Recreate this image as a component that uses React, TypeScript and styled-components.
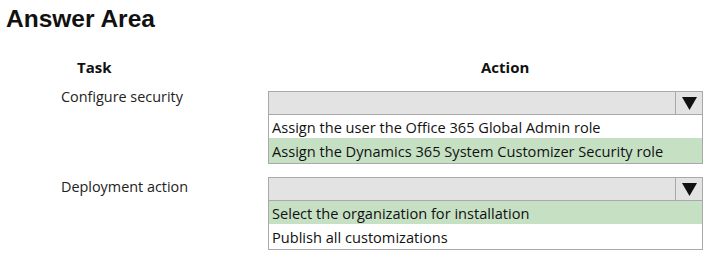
import React from "react";
import styled, { createGlobalStyle } from "styled-components";

const GlobalStyle = createGlobalStyle`
  html, body {
    margin: 0;
    padding: 0;
    background: #ffffff;
  }
  body {
    font-family: "Open Sans", "Liberation Sans", sans-serif;
    color: #1a1a1a;
  }
`;

const Page = styled.div`
  width: 714px;
  height: 260px;
  box-sizing: border-box;
  padding: 5px 0 0 6px;
  overflow: hidden;
`;

const Title = styled.h1`
  margin: 0;
  font-family: "Liberation Sans", Arial, sans-serif;
  font-weight: bold;
  font-size: 24.5px;
  line-height: 28px;
  color: #111;
`;

const Grid = styled.div`
  display: grid;
  grid-template-columns: 262px 435px;
  row-gap: 7px;
  margin-top: 24px;
`;

const ColumnHead = styled.div<{ $offset: number }>`
  font-family: "Open Sans", sans-serif;
  font-weight: bold;
  font-size: 15px;
  line-height: 20px;
  padding-left: ${(p) => p.$offset}px;
  color: #111;
  margin-bottom: 1px;
`;

const TaskLabel = styled.div<{ $top: number }>`
  font-family: "Open Sans", sans-serif;
  font-size: 14.4px;
  line-height: 20px;
  padding-left: 55px;
  padding-top: ${(p) => p.$top}px;
  color: #222;
`;

const Dropdown = styled.div`
  display: flex;
  flex-direction: column;
  margin-top: 6px;
  font-family: "Open Sans", sans-serif;
  font-size: 14.6px;
  color: #111;
`;

const Header = styled.div`
  display: flex;
  height: 24px;
  box-sizing: border-box;
  border: 1px solid #a9a9a9;
  background: #e3e3e3;
`;

const HeaderFill = styled.div`
  flex: 1;
`;

const ArrowBox = styled.div`
  width: 26px;
  border-left: 1px solid #a9a9a9;
  display: flex;
  align-items: center;
  justify-content: center;
`;

const Option = styled.div<{ $selected?: boolean; $last?: boolean }>`
  height: ${(p) => (p.$last ? 26 : 23)}px;
  box-sizing: border-box;
  padding: 0 0 0 3px;
  display: flex;
  align-items: center;
  border-left: 1px solid #a9a9a9;
  border-right: 1px solid #a9a9a9;
  border-bottom: ${(p) => (p.$last ? "1px solid #a9a9a9" : "none")};
  background: ${(p) => (p.$selected ? "#c6e0c4" : "#ffffff")};
  white-space: nowrap;
`;

const Arrow = () => (
  <svg width="15" height="13" viewBox="0 0 15 13">
    <polygon points="0,0 15,0 7.5,13" fill="#111" />
  </svg>
);

type Row = {
  task: string;
  labelTop: number;
  options: { text: string; selected?: boolean }[];
};

const rows: Row[] = [
  {
    task: "Configure security",
    labelTop: 2,
    options: [
      { text: "Assign the user the Office 365 Global Admin role" },
      { text: "Assign the Dynamics 365 System Customizer Security role", selected: true },
    ],
  },
  {
    task: "Deployment action",
    labelTop: 6,
    options: [
      { text: "Select the organization for installation", selected: true },
      { text: "Publish all customizations" },
    ],
  },
];

export default function App() {
  return (
    <>
      <GlobalStyle />
      <Page>
        <Title>Answer Area</Title>
        <Grid>
          <ColumnHead $offset={71}>Task</ColumnHead>
          <ColumnHead $offset={213}>Action</ColumnHead>
          {rows.map((row) => (
            <React.Fragment key={row.task}>
              <TaskLabel $top={row.labelTop}>{row.task}</TaskLabel>
              <Dropdown>
                <Header>
                  <HeaderFill />
                  <ArrowBox>
                    <Arrow />
                  </ArrowBox>
                </Header>
                {row.options.map((o, i) => (
                  <Option
                    key={o.text}
                    $selected={o.selected}
                    $last={i === row.options.length - 1}
                  >
                    {o.text}
                  </Option>
                ))}
              </Dropdown>
            </React.Fragment>
          ))}
        </Grid>
      </Page>
    </>
  );
}
